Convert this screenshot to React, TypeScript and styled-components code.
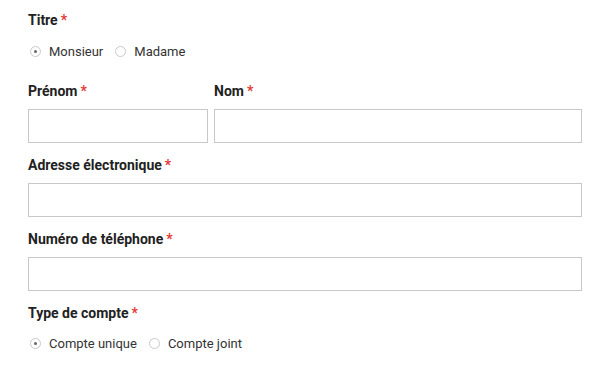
import React from 'react'
import styled, { createGlobalStyle } from 'styled-components'

const GlobalStyle = createGlobalStyle`
    body {
        margin: 0;
        background: #ffffff;
        font-family: Roboto, "Liberation Sans", sans-serif;
    }
`

const Form = styled.form`
    padding: 10px 28px 0 28px;
    width: 554px;
    display: flex;
    flex-direction: column;
`

const Field = styled.div<{ $gap?: number }>`
    display: flex;
    flex-direction: column;
    margin-bottom: ${p => p.$gap ?? 0}px;
    flex: 1;
`

const Row = styled.div`
    display: flex;
    gap: 6px;
    margin-bottom: 12px;
`

const Label = styled.label`
    font-size: 14px;
    font-weight: 700;
    line-height: 20px;
    color: #222;
    margin-bottom: 8px;
`

const Star = styled.span`
    color: #e53935;
    margin-left: 3px;
`

const Input = styled.input`
    box-sizing: border-box;
    height: 34px;
    border: 1px solid #c8c8c8;
    border-radius: 0;
    background: #fff;
    width: 100%;
    outline: none;
`

const RadioGroup = styled.div<{ $top?: number }>`
    display: flex;
    align-items: center;
    height: 20px;
    margin-top: ${p => p.$top ?? 3}px;
`

const Option = styled.label`
    display: flex;
    align-items: center;
    font-size: 13px;
    color: #333;
    margin-right: 10px;
    margin-left: 2px;
`

const Dot = styled.span<{ $checked?: boolean }>`
    box-sizing: border-box;
    width: 11px;
    height: 11px;
    border-radius: 50%;
    border: 1px solid #c9c9c9;
    margin-right: 8px;
    display: flex;
    align-items: center;
    justify-content: center;
    &::after {
        content: '';
        width: 3px;
        height: 3px;
        border-radius: 50%;
        background: ${p => (p.$checked ? '#666' : 'transparent')};
    }
`

const Radio = ({ text, checked }: { text: string; checked?: boolean }) => (
    <Option>
        <Dot $checked={checked} />
        {text}
    </Option>
)

const Req = ({ children }: { children: React.ReactNode }) => (
    <Label>
        {children}
        <Star>*</Star>
    </Label>
)

const App = () => {
    return (
        <>
            <GlobalStyle />
            <Form>
                <Field $gap={20}>
                    <Req>Titre</Req>
                    <RadioGroup>
                        <Radio text="Monsieur" checked />
                        <Radio text="Madame" />
                    </RadioGroup>
                </Field>
                <Row>
                    <Field style={{ flex: '0 0 180px' }}>
                        <Req>Prénom</Req>
                        <Input />
                    </Field>
                    <Field>
                        <Req>Nom</Req>
                        <Input />
                    </Field>
                </Row>
                <Field $gap={12}>
                    <Req>Adresse électronique</Req>
                    <Input />
                </Field>
                <Field $gap={12}>
                    <Req>Numéro de téléphone</Req>
                    <Input />
                </Field>
                <Field>
                    <Req>Type de compte</Req>
                    <RadioGroup $top={2}>
                        <Radio text="Compte unique" checked />
                        <Radio text="Compte joint" />
                    </RadioGroup>
                </Field>
            </Form>
        </>
    )
}

export default App
